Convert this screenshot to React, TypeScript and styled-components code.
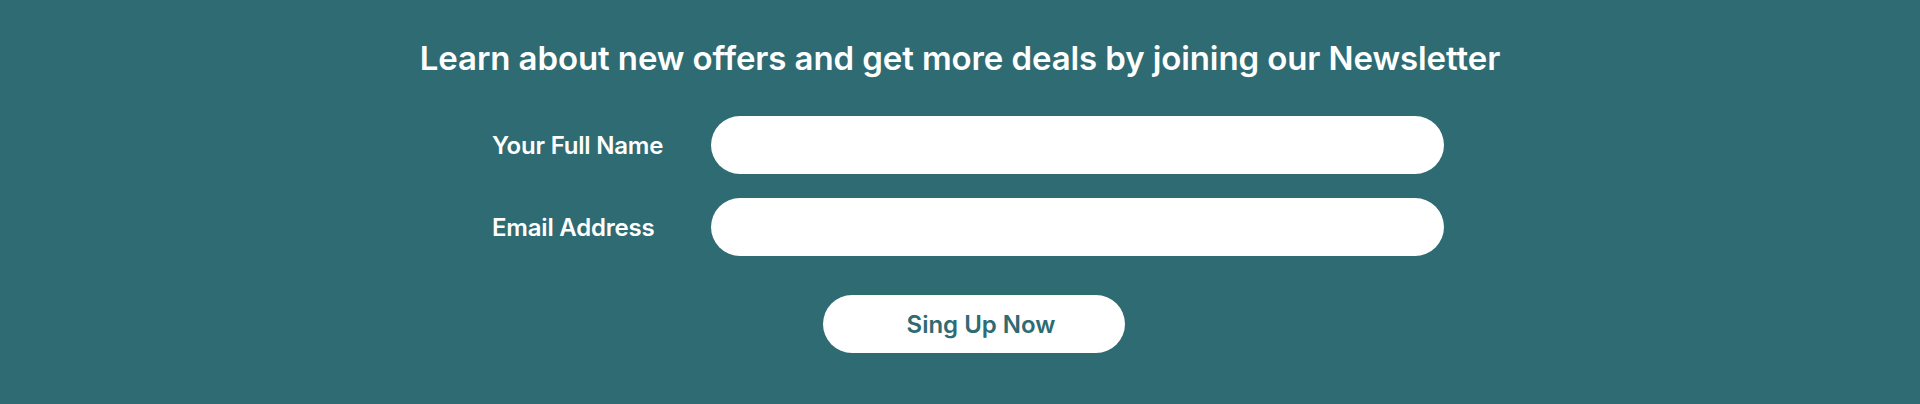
import React from "react";
import styled, { createGlobalStyle } from "styled-components";

const Global = createGlobalStyle`
  html, body { margin: 0; padding: 0; background: #2e6b72; }
  body { font-family: Inter, "Liberation Sans", sans-serif; }
`;

const Section = styled.section`
  height: 404px;
  background: #2e6b72;
  display: flex;
  flex-direction: column;
  align-items: center;
  padding-top: 38px;
  box-sizing: border-box;
`;

const Heading = styled.h2`
  margin: 0;
  color: #ffffff;
  font-family: Inter, sans-serif;
  font-weight: 600;
  font-size: 33px;
  line-height: 40px;
  letter-spacing: -0.1px;
`;

const Form = styled.form`
  width: 952px;
  margin-left: 16px;
  margin-top: 38px;
  display: flex;
  flex-direction: column;
  gap: 24px;
`;

const Row = styled.div`
  display: grid;
  grid-template-columns: 219px 1fr;
  align-items: center;
`;

const Label = styled.label`
  color: #ffffff;
  font-family: Inter, sans-serif;
  font-weight: 600;
  font-size: 24px;
  letter-spacing: -0.2px;
`;

const Input = styled.input`
  height: 58px;
  border: none;
  border-radius: 29px;
  background: #ffffff;
  padding: 0 28px;
  outline: none;
  font-size: 20px;
`;

const ButtonRow = styled.div`
  display: flex;
  justify-content: center;
  padding-left: 12px;
  margin-top: 15px;
`;

const Button = styled.button`
  width: 302px;
  height: 58px;
  border: none;
  border-radius: 29px;
  background: #ffffff;
  color: #2e6b72;
  font-family: Inter, sans-serif;
  font-weight: 600;
  font-size: 24px;
  padding-left: 20px;
  cursor: pointer;
`;

export default function App() {
  return (
    <>
      <Global />
      <Section>
        <Heading>Learn about new offers and get more deals by joining our Newsletter</Heading>
        <Form onSubmit={(e) => e.preventDefault()}>
          <Row>
            <Label htmlFor="name">Your Full Name</Label>
            <Input id="name" type="text" />
          </Row>
          <Row>
            <Label htmlFor="email">Email Address</Label>
            <Input id="email" type="email" />
          </Row>
          <ButtonRow>
            <Button type="submit">Sing Up Now</Button>
          </ButtonRow>
        </Form>
      </Section>
    </>
  );
}
